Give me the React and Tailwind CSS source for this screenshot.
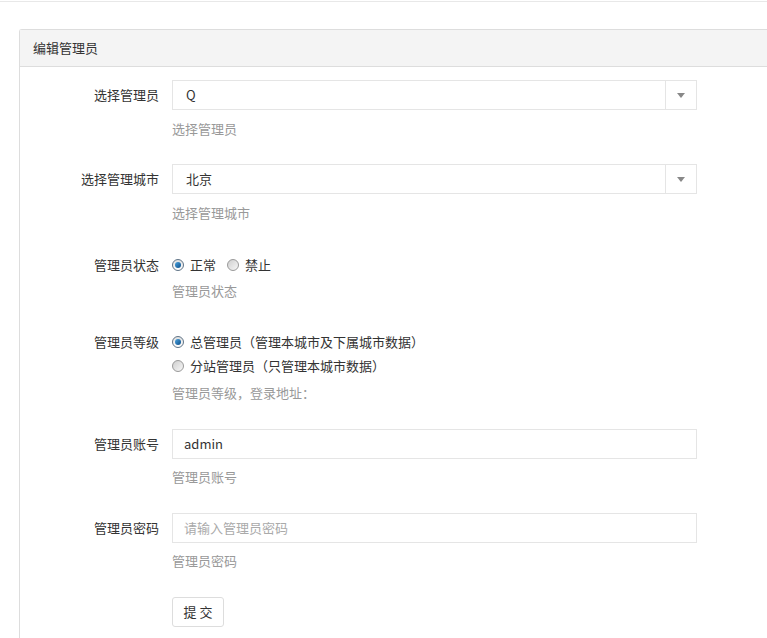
import React from "react";

const font = {
  fontFamily: '"Noto Sans CJK SC", "Noto Sans", sans-serif',
};

function Radio({ checked, label }) {
  return (
    <label className="flex items-center h-[22px] text-[13px] text-[#333]">
      <span
        className={
          "w-[12px] h-[12px] rounded-full border flex items-center justify-center " +
          (checked
            ? "border-[#5f7386] bg-gradient-to-b from-[#e0e0e0] to-[#ffffff]"
            : "border-[#999] bg-gradient-to-br from-[#cfcfcf] to-[#f7f7f7]")
        }
      >
        {checked && (
          <span className="w-[6px] h-[6px] rounded-full bg-gradient-to-br from-[#4aa3df] to-[#0b4f8a]" />
        )}
      </span>
      <span className="ml-[6px]">{label}</span>
    </label>
  );
}

function Help({ children, className = "" }) {
  return (
    <div className={"h-[18px] leading-[18px] text-[13px] text-[#999] " + className}>
      {children}
    </div>
  );
}

function Group({ label, labelClass = "h-[30px]", className = "", children }) {
  return (
    <div className={"flex " + className}>
      <div
        className={
          "w-[139px] shrink-0 flex items-center justify-end text-[13px] text-[#333] " +
          labelClass
        }
      >
        {label}
      </div>
      <div className="ml-[13px] w-[525px]">{children}</div>
    </div>
  );
}

function Select({ value }) {
  return (
    <div className="flex h-[30px] border border-[#e5e5e5] bg-white">
      <div className="flex-1 flex items-center pl-[13px] text-[13px] text-[#333]">
        {value}
      </div>
      <div className="w-[31px] border-l border-[#e5e5e5] flex items-center justify-center">
        <svg width="8" height="5" viewBox="0 0 8 5">
          <path d="M0 0 H8 L4 5 Z" fill="#888" />
        </svg>
      </div>
    </div>
  );
}

function Input({ value, placeholder }) {
  return (
    <div className="flex items-center h-[30px] border border-[#e5e5e5] bg-white pl-[11px] text-[13px]">
      {value ? (
        <span className="text-[#333]">{value}</span>
      ) : (
        <span className="text-[#aaa]">{placeholder}</span>
      )}
    </div>
  );
}

export default function App() {
  return (
    <div className="w-[767px] h-[638px] overflow-hidden bg-white" style={font}>
      <div className="h-px mt-px bg-[#e8e8e8]" />
      <div className="ml-[19px] mt-[27px] w-[800px] border-l border-t border-[#dddddd] rounded-tl-[3px]">
        <div className="h-[37px] bg-[#f4f4f4] border-b border-[#dddddd] flex items-center pl-[13px] text-[13px] text-[#333]">
          编辑管理员
        </div>
        <div className="pt-[13px] pb-[30px]">
          <Group label="选择管理员" className="mb-[26px]">
            <Select value="Q" />
            <Help className="mt-[10px]">选择管理员</Help>
          </Group>
          <Group label="选择管理城市" className="mb-[26px]">
            <Select value="北京" />
            <Help className="mt-[10px]">选择管理城市</Help>
          </Group>
          <Group label="管理员状态" labelClass="h-[34px]" className="mb-[26px]">
            <div className="flex items-center h-[34px] gap-[11px]">
              <Radio checked label="正常" />
              <Radio label="禁止" />
            </div>
            <Help>管理员状态</Help>
          </Group>
          <Group label="管理员等级" labelClass="h-[22px] mt-[5px]" className="mb-[27px]">
            <div className="pt-[5px]">
              <Radio checked label="总管理员（管理本城市及下属城市数据）" />
              <div className="mt-[2px]">
                <Radio label="分站管理员（只管理本城市数据）" />
              </div>
            </div>
            <Help className="mt-[7px]">管理员等级，登录地址：</Help>
          </Group>
          <Group label="管理员账号" className="mb-[27px]">
            <Input value="admin" />
            <Help className="mt-[9px]">管理员账号</Help>
          </Group>
          <Group label="管理员密码" className="mb-[27px]">
            <Input placeholder="请输入管理员密码" />
            <Help className="mt-[9px]">管理员密码</Help>
          </Group>
          <div className="flex">
            <div className="w-[139px] shrink-0" />
            <button className="ml-[13px] h-[30px] w-[52px] border border-[#ddd] rounded-[3px] bg-white text-[13px] text-[#333]">
              提 交
            </button>
          </div>
        </div>
      </div>
    </div>
  );
}
